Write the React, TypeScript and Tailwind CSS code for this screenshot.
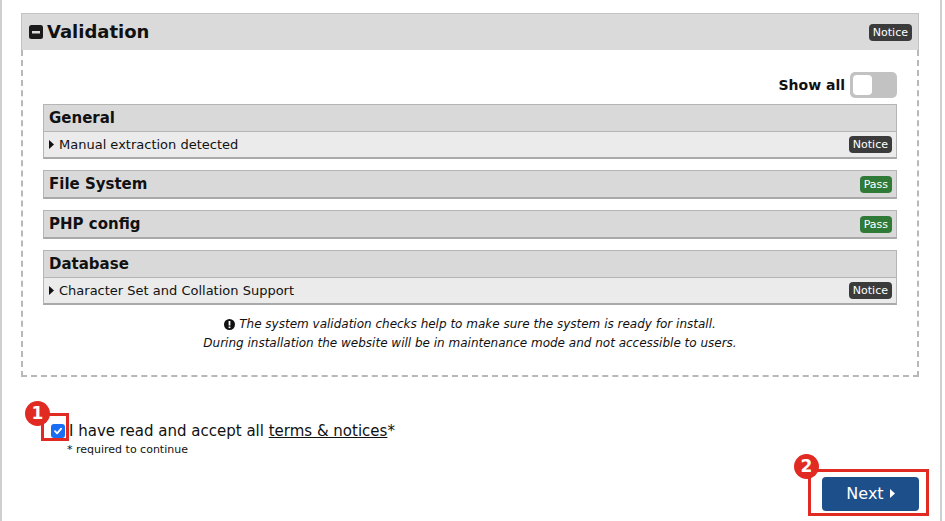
import React from "react";

const font = { fontFamily: '"DejaVu Sans", Verdana, sans-serif' };

function Caret({ className = "" }: { className?: string }) {
  return (
    <svg width="5" height="9" viewBox="0 0 5 9" className={className}>
      <path d="M0 0 L5 4.5 L0 9 Z" fill="#111" />
    </svg>
  );
}

function Badge({ kind }: { kind: "Notice" | "Pass" }) {
  const bg = kind === "Notice" ? "bg-[#3b3b3b]" : "bg-[#2f7a36]";
  return (
    <span className={`${bg} text-white text-[11px] leading-[17px] px-[4px] rounded-[4px]`}>{kind}</span>
  );
}

function Section({ title, badge, rows }: { title: string; badge?: "Pass"; rows?: { text: string; badge: "Notice" }[] }) {
  return (
    <div className="border border-[#b5b5b5] border-b-2 border-b-[#a9a9a9] bg-[#d9d9d9]">
      <div className="h-[26px] flex items-center justify-between pl-[5px] pr-[4px]">
        <span className="font-bold text-[15px] text-[#111]">{title}</span>
        {badge && <Badge kind={badge} />}
      </div>
      {rows?.map((r) => (
        <div key={r.text} className="h-[26px] border-t border-[#b5b5b5] bg-[#ebebeb] flex items-center justify-between pl-[5px] pr-[4px]">
          <span className="flex items-center gap-[5px] text-[13px] text-[#111]">
            <Caret />
            {r.text}
          </span>
          <Badge kind={r.badge} />
        </div>
      ))}
    </div>
  );
}

function NumBadge({ n }: { n: string }) {
  return (
    <div className="absolute w-[25px] h-[25px] rounded-full bg-[#e02a22] text-white font-bold text-[17px] flex items-center justify-center leading-none">
      {n}
    </div>
  );
}

export default function App() {
  return (
    <div style={font} className="w-[945px] h-[521px] bg-white overflow-hidden">
      <div className="w-[942px] h-[521px] border-l-2 border-r-2 border-[#cfcfcf] pl-[19px] pt-[13px]">
        <div className="w-[898px]">
          <div className="h-[37px] bg-[#dadada] border-t border-l border-r border-[#c3c3c3] flex items-center justify-between pl-[7px] pr-[6px]">
            <div className="flex items-center gap-[4px]">
              <svg width="14" height="14" viewBox="0 0 14 14">
                <rect x="0" y="0" width="14" height="14" rx="2.5" fill="#1a1a1a" />
                <rect x="3" y="6" width="8" height="2.5" fill="#dadada" />
              </svg>
              <span className="font-bold text-[18px] text-[#111] leading-none">Validation</span>
            </div>
            <Badge kind="Notice" />
          </div>
          <div className="border-2 border-t-0 border-dashed border-[#b8b8b8] px-[20px] pt-[22px] pb-[22px]">
            <div className="flex justify-end items-center gap-[5px] mb-[6px]">
              <span className="font-bold text-[14px] text-[#111]">Show all</span>
              <div className="w-[47px] h-[26px] rounded-[5px] bg-[#c2c2c2] flex items-center pl-[3px]">
                <div className="w-[19px] h-[20px] rounded-[4px] bg-white" />
              </div>
            </div>
            <div className="flex flex-col gap-[11px]">
              <Section title="General" rows={[{ text: "Manual extraction detected", badge: "Notice" }]} />
              <Section title="File System" badge="Pass" />
              <Section title="PHP config" badge="Pass" />
              <Section title="Database" rows={[{ text: "Character Set and Collation Support", badge: "Notice" }]} />
            </div>
            <div className="mt-[10px] text-center italic text-[12px] leading-[19px] text-[#111]">
              <div className="flex items-center justify-center gap-[4px]">
                <svg width="11" height="11" viewBox="0 0 11 11">
                  <circle cx="5.5" cy="5.5" r="5.5" fill="#111" />
                  <rect x="4.6" y="2" width="1.8" height="4.5" fill="#fff" />
                  <rect x="4.6" y="7.5" width="1.8" height="1.6" fill="#fff" />
                </svg>
                <span>The system validation checks help to make sure the system is ready for install.</span>
              </div>
              <div>During installation the website will be in maintenance mode and not accessible to users.</div>
            </div>
          </div>

          <div className="relative mt-[44px] pl-[30px]">
            <div className="relative flex items-center">
              <div className="absolute left-[-10px] top-[-8px] w-[28px] h-[28px] border-[3px] border-[#e02a22]" />
              <div className="absolute left-[-26px] top-[-20px]">
                <NumBadge n="1" />
              </div>
              <div className="relative w-[14px] h-[14px] rounded-[3px] bg-[#1a6ef5] flex items-center justify-center">
                <svg width="10" height="10" viewBox="0 0 10 10">
                  <path d="M2 5.2 L4.1 7.3 L8.2 2.6" stroke="#fff" strokeWidth="1.8" fill="none" strokeLinecap="round" strokeLinejoin="round" />
                </svg>
              </div>
              <span className="ml-[4px] text-[15px] text-[#111] leading-[20px]">
                I have read and accept all <span className="underline">terms &amp; notices</span>*
              </span>
            </div>
            <div className="ml-[16px] mt-[1px] text-[11px] text-[#111]">* required to continue</div>
          </div>

          <div className="flex justify-end mt-[10px]">
            <div className="relative mr-[-10px] border-[3px] border-[#e02a22] pl-[11px] pr-[7px] pt-[5px] pb-[2px]">
              <div className="absolute left-[-17px] top-[-18px]">
                <NumBadge n="2" />
              </div>
              <div className="w-[97px] h-[34px] rounded-[4px] bg-[#1d4f8b] text-white text-[16px] flex items-center justify-center gap-[6px]">
                Next
                <svg width="5" height="9" viewBox="0 0 5 9">
                  <path d="M0 0 L5 4.5 L0 9 Z" fill="#fff" />
                </svg>
              </div>
            </div>
          </div>
        </div>
      </div>
    </div>
  );
}
